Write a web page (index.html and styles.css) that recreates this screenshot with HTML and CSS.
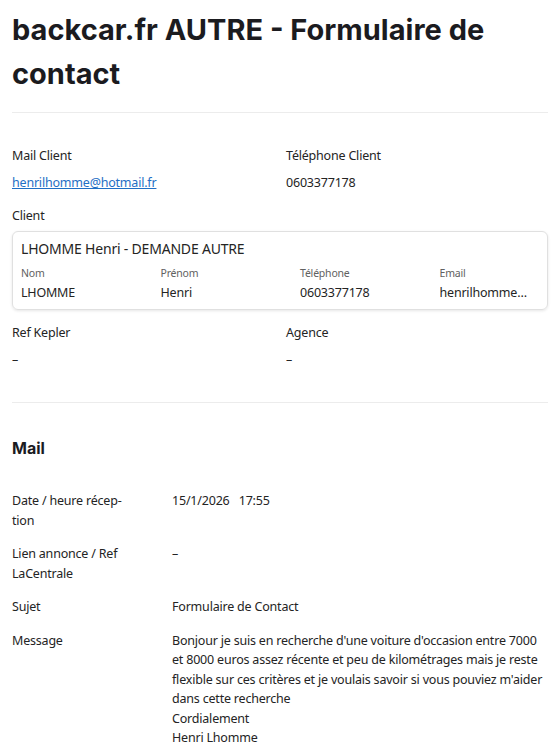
FILE: index.html
```html
<!DOCTYPE html>
<html lang="fr">

<head>
  <meta charset="UTF-8">
  <title>backcar.fr AUTRE - Formulaire de contact</title>
  <link rel="stylesheet" href="styles.css">
</head>

<body>
  <h1 class="title">backcar.fr AUTRE - Formulaire de contact</h1>
  <hr class="divider">

  <div class="fields">
    <div class="field">
      <div class="field-label">Mail Client</div>
      <a class="field-value link" href="#">henrilhomme@hotmail.fr</a>
    </div>
    <div class="field">
      <div class="field-label">Téléphone Client</div>
      <div class="field-value">0603377178</div>
    </div>
  </div>

  <div class="client">
    <div class="field-label">Client</div>
    <div class="card">
      <div class="card-title">LHOMME Henri - DEMANDE AUTRE</div>
      <div class="card-grid">
        <div class="card-cell">
          <div class="card-label">Nom</div>
          <div class="card-value">LHOMME</div>
        </div>
        <div class="card-cell">
          <div class="card-label">Prénom</div>
          <div class="card-value">Henri</div>
        </div>
        <div class="card-cell">
          <div class="card-label">Téléphone</div>
          <div class="card-value">0603377178</div>
        </div>
        <div class="card-cell">
          <div class="card-label">Email</div>
          <div class="card-value">henrilhomme@hotmail.fr</div>
        </div>
      </div>
    </div>
  </div>

  <div class="fields fields-ref">
    <div class="field">
      <div class="field-label">Ref Kepler</div>
      <div class="field-value">–</div>
    </div>
    <div class="field">
      <div class="field-label">Agence</div>
      <div class="field-value">–</div>
    </div>
  </div>

  <hr class="divider divider-mail">

  <h2 class="section-title">Mail</h2>

  <div class="mail">
    <div class="mail-label">Date / heure récep&shy;tion</div>
    <div class="mail-value">15/1/2026&nbsp;&nbsp;&nbsp;17:55</div>

    <div class="mail-label">Lien annonce / Ref LaCentrale</div>
    <div class="mail-value">–</div>

    <div class="mail-label">Sujet</div>
    <div class="mail-value">Formulaire de Contact</div>

    <div class="mail-label">Message</div>
    <div class="mail-value">Bonjour je suis en recherche d'une voiture d'occasion entre 7000 et 8000 euros assez récente et peu de kilométrages mais je reste flexible sur ces critères et je voulais savoir si vous pouviez m'aider dans cette recherche<br>Cordialement<br>Henri Lhomme</div>
  </div>
</body>

</html>
```

FILE: styles.css
```css
body {
  margin: 0;
  padding: 8px 10px 0 12px;
  font-family: "Noto Sans", "Open Sans", sans-serif;
  font-size: 12.5px;
  letter-spacing: -0.2px;
  line-height: 20px;
  color: #242424;
  background: #fff;
}

.title {
  margin: 0;
  font-family: Inter, "Liberation Sans", sans-serif;
  font-size: 29px;
  line-height: 44px;
  letter-spacing: 0;
  font-weight: 700;
  color: #1b1b1f;
}

.divider {
  margin: 16px 0 0;
  border: none;
  border-top: 1px solid #ececec;
}

.fields {
  display: grid;
  grid-template-columns: 1fr 1fr;
  gap: 12px;
  margin-top: 33px;
}

.field-label {
  margin-bottom: 7px;
}

.field-value {
  display: block;
}

.link {
  color: #1f6fc5;
  text-decoration: underline;
}

.client {
  margin-top: 13px;
}

.client .field-label {
  margin-bottom: 5px;
}

.card {
  border: 1px solid #e0e0e0;
  border-radius: 6px;
  padding: 7px 8px 6px;
  box-shadow: 0 1px 3px rgba(0, 0, 0, 0.1);
}

.card-title {
  font-size: 14px;
  line-height: 20px;
  margin-bottom: 6px;
}

.card-grid {
  display: grid;
  grid-template-columns: repeat(4, 1fr);
  gap: 40px;
}

.card-cell {
  min-width: 0;
  padding-right: 8px;
}

.card-label {
  font-size: 10.5px;
  line-height: 16px;
  color: #616161;
  margin-bottom: 2px;
}

.card-value {
  white-space: nowrap;
  overflow: hidden;
  text-overflow: ellipsis;
}

.fields-ref {
  margin-top: 13px;
}

.divider-mail {
  margin-top: 32px;
}

.section-title {
  margin: 33px 0 0;
  font-family: Inter, "Liberation Sans", sans-serif;
  font-size: 16px;
  line-height: 24px;
  letter-spacing: 0;
  font-weight: 700;
  color: #1b1b1f;
}

.mail {
  display: grid;
  grid-template-columns: 120px 1fr;
  column-gap: 40px;
  row-gap: 14px;
  margin-top: 31px;
  line-height: 19.5px;
}
```
